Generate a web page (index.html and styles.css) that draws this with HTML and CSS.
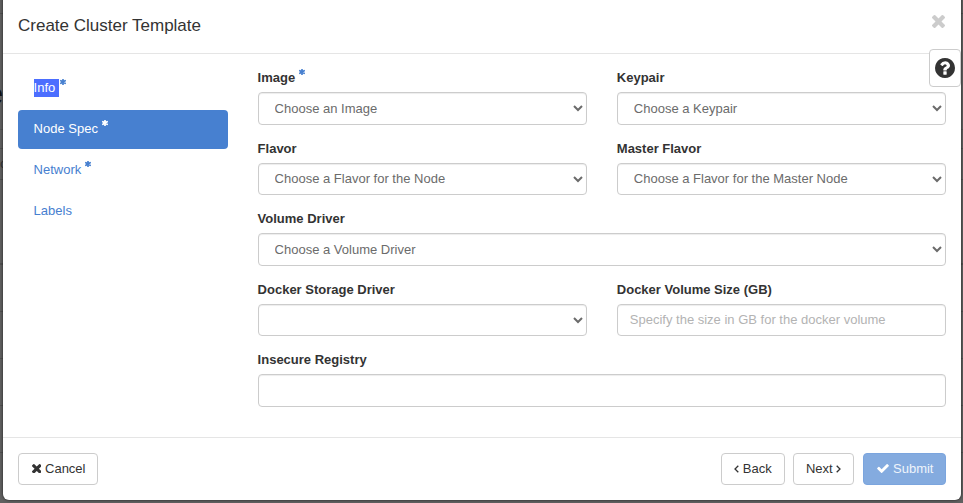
FILE: index.html
```html
<!DOCTYPE html>
<html lang="en">
<head>
<meta charset="utf-8">
<title>Create Cluster Template</title>
<link rel="stylesheet" href="styles.css">
</head>
<body>
<svg class="defs" aria-hidden="true">
  <symbol id="times" viewBox="302 366 1188 1188"><path d="M1490 1322q0 40-28 68l-136 136q-28 28-68 28t-68-28l-294-294-294 294q-28 28-68 28t-68-28l-136-136q-28-28-28-68t28-68l294-294-294-294q-28-28-28-68t28-68l136-136q28-28 68-28t68 28l294 294 294-294q28-28 68-28t68 28l136 136q28 28 28 68t-28 68l-294 294 294 294q28 28 28 68z"/></symbol>
  <symbol id="check" viewBox="121 334 1550 1188"><path d="M1671 566q0 40-28 68l-724 724-136 136q-28 28-68 28t-68-28l-136-136-362-362q-28-28-28-68t28-68l136-136q28-28 68-28t68 28l294 295 656-657q28-28 68-28t68 28l136 136q28 28 28 68z"/></symbol>
  <symbol id="question" viewBox="128 128 1536 1536"><path d="M1024 1376v-192q0-14-9-23t-23-9h-192q-14 0-23 9t-9 23v192q0 14 9 23t23 9h192q14 0 23-9t9-23zm256-672q0-88-55.500-163t-138.500-116-170.500-41q-243 0-371 213-15 24 8 42l132 100q7 6 19 6 16 0 25-12 53-68 86-92 34-24 86-24 48 0 85.500 26t37.500 59q0 38-20 61t-68 45q-63 28-115.500 86.500t-52.500 125.500v36q0 14 9 23t23 9h192q14 0 23-9t9-23q0-19 21.500-49.500t54.500-49.500q32-18 49-28.500t46-35 44.500-48 28-60.500 12.500-81zm384 192q0 209-103 385.500t-279.500 279.500-385.500 103-385.500-103-279.500-279.500-103-385.500 103-385.500 279.500-279.500 385.500-103 385.500 103 279.500 279.500 103 385.500z"/></symbol>
  <symbol id="asterisk" viewBox="0 0 12 12"><path d="M6 1v10M1.700 3.500l8.600 5M10.300 3.500l-8.600 5" fill="none" stroke="currentColor" stroke-width="3.400" stroke-linecap="round"/></symbol>
  <symbol id="left" viewBox="0 0 5 8"><path d="M4.300.7L1 4l3.300 3.300" fill="none" stroke="currentColor" stroke-width="1.300"/></symbol>
  <symbol id="right" viewBox="0 0 5 8"><path d="M.7.7L4 4 .7 7.300" fill="none" stroke="currentColor" stroke-width="1.300"/></symbol>
</svg>
<div class="backdrop" aria-hidden="true">
  <i class="glyph heading-glyph">e</i>
  <i class="glyph cell-glyph">o</i>
</div>
<div class="modal">
  <header class="modal-header">
    <h3>Create Cluster Template</h3>
    <button class="close" aria-label="Close"><svg><use href="#times"/></svg></button>
  </header>
  <button class="help" aria-label="Help"><svg><use href="#question"/></svg></button>
  <div class="modal-body">
    <nav class="steps">
      <a class="step"><span class="selected">Info </span><svg class="required tight"><use href="#asterisk"/></svg></a>
      <a class="step active">Node Spec<svg class="required"><use href="#asterisk"/></svg></a>
      <a class="step">Network<svg class="required"><use href="#asterisk"/></svg></a>
      <a class="step">Labels</a>
    </nav>
    <form class="fields">
      <div class="field"><label for="image">Image<svg class="required"><use href="#asterisk"/></svg></label><select id="image"><option>Choose an Image</option></select></div>
      <div class="field"><label for="keypair">Keypair</label><select id="keypair"><option>Choose a Keypair</option></select></div>
      <div class="field"><label for="flavor">Flavor</label><select id="flavor"><option>Choose a Flavor for the Node</option></select></div>
      <div class="field"><label for="master">Master Flavor</label><select id="master"><option>Choose a Flavor for the Master Node</option></select></div>
      <div class="field wide"><label for="volume">Volume Driver</label><select id="volume"><option>Choose a Volume Driver</option></select></div>
      <div class="field"><label for="storage">Docker Storage Driver</label><select id="storage"><option></option></select></div>
      <div class="field"><label for="size">Docker Volume Size (GB)</label><input id="size" placeholder="Specify the size in GB for the docker volume"></div>
      <div class="field wide"><label for="registry">Insecure Registry</label><input id="registry"></div>
    </form>
  </div>
  <footer class="modal-footer">
    <button class="btn cancel"><svg><use href="#times"/></svg>Cancel</button>
    <button class="btn back"><svg><use href="#left"/></svg>Back</button>
    <button class="btn next">Next<svg><use href="#right"/></svg></button>
    <button class="btn submit"><svg><use href="#check"/></svg>Submit</button>
  </footer>
</div>
</body>
</html>
```
FILE: styles.css
```css
* { box-sizing: border-box; }
body {
  margin: 0;
  height: 503px;
  overflow: hidden;
  background: #606060;
  color: #333;
  font: 13px/18.57px "Liberation Sans", Arial, sans-serif;
}
svg { fill: currentColor; }
.defs { display: none; }
.backdrop {
  position: absolute;
  inset: 0;
  overflow: hidden;
  background:
    linear-gradient(#505050, #505050) 0 13px / 100% 1px no-repeat,
    linear-gradient(#555, #555) 0 129px / 100% 1px no-repeat,
    linear-gradient(#505050, #505050) 0 148px / 100% 1px no-repeat,
    linear-gradient(#505050, #505050) 0 179px / 100% 1px no-repeat,
    linear-gradient(#505050, #505050) 0 263px / 100% 2px no-repeat,
    linear-gradient(#505050, #505050) 0 311px / 100% 1px no-repeat,
    linear-gradient(#505050, #505050) 0 358px / 100% 1px no-repeat,
    linear-gradient(#505050, #505050) 0 405px / 100% 1px no-repeat,
    linear-gradient(#505050, #505050) 0 452px / 100% 1px no-repeat,
    #606060;
}
.glyph { position: absolute; font-style: normal; }
.heading-glyph { left: -13px; top: 82px; font-size: 29px; line-height: 24px; color: #111; }
.cell-glyph { left: 0; top: 155px; color: #333; }
.modal {
  position: relative;
  display: flex;
  flex-direction: column;
  width: 958px;
  height: 507px;
  margin: -7px 0 0 3px;
  background: #fff;
  border-radius: 6px;
  box-shadow: 0 0 3px rgba(0, 0, 0, .7);
}
.modal-header {
  display: flex;
  justify-content: space-between;
  align-items: center;
  height: 61px;
  padding: 4px 15px 0;
  border-bottom: 1px solid #e5e5e5;
}
h3 { margin: 0; font-size: 17px; line-height: 19px; font-weight: 400; }
.close { width: 15px; height: 13px; padding: 0; margin-top: -7px; border: 0; background: none; color: #ccc; }
.close svg { display: block; width: 13px; height: 13px; margin: 0 1px; }
.help {
  position: absolute;
  left: 926px;
  top: 56px;
  width: 32px;
  height: 38px;
  padding: 0 5px;
  border: 1px solid #ccc;
  border-radius: 4px;
  background: #fff;
  color: #333;
}
.help svg { display: block; width: 20px; height: 20px; }
.modal-body { display: flex; flex: 1; padding: 15px 15px 0; gap: 29.6px; }
.steps { display: flex; flex-direction: column; gap: 2px; width: 210px; }
.step {
  display: flex;
  align-items: center;
  height: 39px;
  padding: 0 15.6px 1px;
  border-radius: 4px;
  color: #4780d0;
}
.step.active { background: #4780d0; color: #fff; }
.selected { height: 18px; line-height: 18px; white-space: pre; color: #fff; background: #4b6eff; }
.required { width: 6px; height: 6px; margin: -12px 0 0 4px; color: #4780d0; overflow: visible; }
.active .required { color: #fff; }
.required.tight { margin-left: 1px; }
.fields {
  flex: 1;
  display: grid;
  grid-template-columns: 1fr 1fr;
  grid-auto-rows: 70.57px;
  align-content: start;
  column-gap: 30px;
}
.wide { grid-column: 1 / -1; }
label { display: flex; align-items: center; height: 19px; margin-bottom: 4px; font-weight: 700; }
label .required { margin-top: -13px; }
select, input {
  display: block;
  width: 100%;
  height: 32.57px;
  padding: 6px 12px;
  border: 1px solid #ccc;
  border-radius: 4px;
  background: #fff;
  color: #6b6b6b;
  font: inherit;
  box-shadow: inset 0 1px 1px rgba(0, 0, 0, .075);
}
select { padding-right: 0; }
input::placeholder { color: #b3b3b3; }
.modal-footer {
  display: flex;
  align-items: flex-start;
  height: 63px;
  padding: 15px;
  border-top: 1px solid #e5e5e5;
}
.btn {
  display: flex;
  align-items: center;
  justify-content: center;
  height: 32px;
  padding: 0;
  border: 1px solid #ccc;
  border-radius: 4px;
  background: #fff;
  color: #333;
  font: inherit;
}
.btn svg { width: 5px; height: 8px; }
.cancel { width: 80px; gap: 4px; margin-right: auto; padding-left: 1px; }
.cancel svg { width: 9.5px; height: 9.500px; margin-top: -1px; }
.back { width: 64px; gap: 3.5px; margin-right: 8px; }
.next { width: 61px; gap: 3.5px; margin-right: 9px; }
.submit { width: 83px; gap: 4.500px; border-color: #7ba5de; background: #84abdf; color: #eff4fb; padding-left: 1px; }
.submit svg { width: 12px; height: 9px; margin-top: -1px; color: #fff; }
```
